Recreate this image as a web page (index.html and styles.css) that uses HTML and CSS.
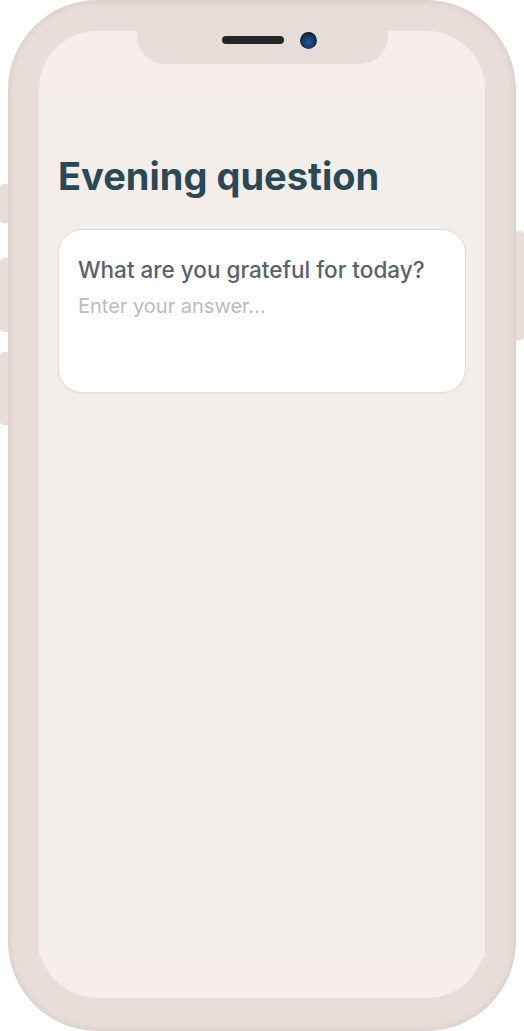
FILE: index.html
```html
<!DOCTYPE html>
<html lang="en">

<head>
    <meta charset="UTF-8">
    <meta name="viewport" content="width=device-width, initial-scale=1.0">
    <title>Evening question</title>
    <link rel="stylesheet" href="styles.css">
</head>

<body>
    <div class="phone">
        <span class="side-btn left b1"></span>
        <span class="side-btn left b2"></span>
        <span class="side-btn left b3"></span>
        <span class="side-btn right b4"></span>

        <div class="screen">
            <div class="top-bar">
                <div class="notch">
                    <span class="speaker"></span>
                    <span class="camera"></span>
                </div>
            </div>

            <main class="content">
                <h1 class="title">Evening question</h1>
                <div class="card">
                    <label for="answer" class="question">What are you grateful for today?</label>
                    <textarea id="answer" class="answer" placeholder="Enter your answer..."></textarea>
                </div>
            </main>

            <div class="home-area"></div>
        </div>
    </div>
</body>

</html>
```

FILE: styles.css
```css
body {
    margin: 0;
    background-color: #ffffff;
    font-family: Inter, 'Noto Sans', sans-serif;
}

.phone {
    position: relative;
    box-sizing: border-box;
    width: 508px;
    height: 1031px;
    margin-left: 8px;
    padding: 31px 31px 33px;
    background-color: #e8ddd8;
    border-radius: 90px;
    box-shadow: inset 0 0 6px rgba(120, 95, 85, 0.2);
}

/* hardware buttons sticking out of the frame */
.side-btn {
    position: absolute;
    width: 8px;
    background-color: #e8ddd8;
}

.side-btn.left {
    left: -8px;
    border-radius: 4px 0 0 4px;
}

.side-btn.right {
    right: -8px;
    border-radius: 0 4px 4px 0;
}

.b1 { top: 184px; height: 39px; }
.b2 { top: 258px; height: 74px; }
.b3 { top: 352px; height: 73px; }
.b4 { top: 231px; height: 109px; }

.screen {
    display: flex;
    flex-direction: column;
    height: 100%;
    background-color: #f6eeec;
    border-radius: 58px;
}

.top-bar {
    display: flex;
    justify-content: center;
    height: 58px;
    flex-shrink: 0;
}

.notch {
    display: flex;
    align-items: center;
    justify-content: center;
    gap: 16px;
    width: 251px;
    height: 33px;
    padding-left: 14px;
    box-sizing: border-box;
    background-color: #e8ddd8;
    border-radius: 0 0 28px 28px;
}

.speaker {
    width: 62px;
    height: 8px;
    margin-top: -15px;
    border-radius: 4px;
    background-color: #262626;
}

.camera {
    width: 17px;
    height: 17px;
    margin-top: -15px;
    border-radius: 50%;
    background: radial-gradient(circle at 50% 60%, #1f5a9c 0%, #173a63 45%, #101820 80%);
}

.content {
    flex: 1;
    padding: 64px 19px 0;
    background-color: #f3eeea;
}

.title {
    margin: 0 0 30px;
    font-size: 38px;
    line-height: 46px;
    font-weight: 700;
    color: #2b4856;
}

.card {
    display: flex;
    flex-direction: column;
    height: 164px;
    box-sizing: border-box;
    padding: 26px 19px 20px;
    background-color: #ffffff;
    border: 1px solid #e4dcd8;
    border-radius: 24px;
    box-shadow: 0 1px 2px rgba(0, 0, 0, 0.04);
}

.question {
    font-size: 22.5px;
    line-height: 27px;
    font-weight: 500;
    color: #58626c;
}

.answer {
    flex: 1;
    margin-top: 11px;
    padding: 0;
    border: none;
    outline: none;
    resize: none;
    font-family: inherit;
    font-size: 20px;
    line-height: 24px;
    color: #58626c;
    background: transparent;
}

.answer::placeholder {
    color: #b9bcbf;
}

.home-area {
    height: 41px;
    flex-shrink: 0;
}
```
